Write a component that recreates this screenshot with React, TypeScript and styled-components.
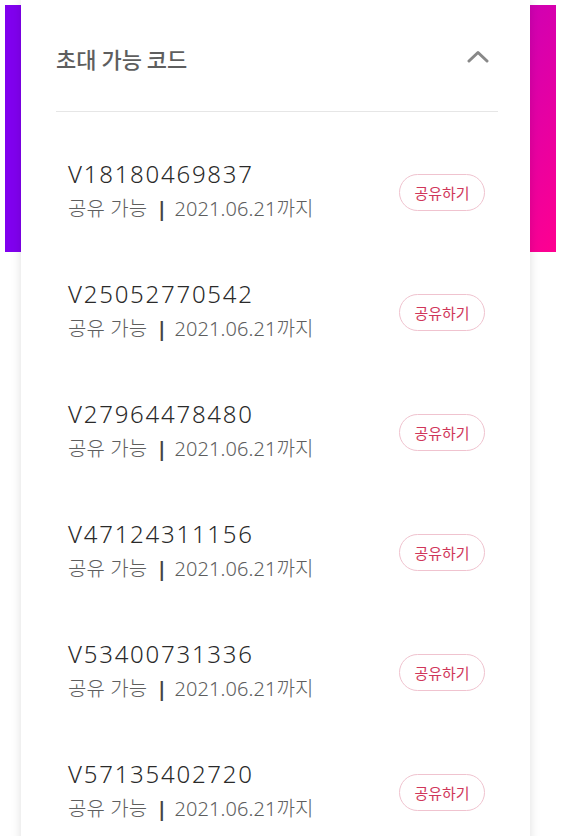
import React from "react";
import styled, { createGlobalStyle } from "styled-components";

const GlobalStyle = createGlobalStyle`
  html, body { margin: 0; padding: 0; background: #ffffff; }
  body { font-family: "Noto Sans", "Noto Sans CJK KR", sans-serif; }
  * { box-sizing: border-box; }
`;

const Page = styled.div`
  width: 563px;
  min-height: 836px;
  padding: 0 33px 0 21px;
  background-image: linear-gradient(120deg, #8000ee 35%, #ff0090 100%);
  background-repeat: no-repeat;
  background-position: 5px 5px;
  background-size: 551px 247px;
  overflow: hidden;
`;

const Card = styled.section`
  background: #ffffff;
  box-shadow: 0 0 10px rgba(0, 0, 0, 0.13);
  padding: 0 32px 0 35px;
  min-height: 836px;
`;

const Header = styled.div`
  height: 112px;
  padding-top: 4px;
  display: flex;
  align-items: center;
  justify-content: space-between;
  border-bottom: 1px solid #e6e6e6;
`;

const Title = styled.h2`
  margin: 0;
  font-family: "Noto Sans CJK KR", sans-serif;
  font-weight: 500;
  font-size: 22px;
  color: #5e5e5e;
`;

const Toggle = styled.button`
  border: none;
  background: none;
  padding: 0;
  margin-right: 9px;
  margin-top: -4px;
  width: 22px;
  height: 14px;
  display: flex;
  align-items: center;
  justify-content: center;
  cursor: pointer;
`;

const List = styled.ul`
  list-style: none;
  margin: 0;
  padding: 20px 0 0;
`;

const Row = styled.li`
  height: 120px;
  padding: 0 13px 0 12px;
  display: flex;
  align-items: center;
  justify-content: space-between;
`;

const Info = styled.div`
  display: flex;
  flex-direction: column;
  margin-top: -2px;
`;

const Code = styled.div`
  font-family: "Noto Sans", sans-serif;
  font-weight: 300;
  font-size: 24px;
  line-height: 30px;
  letter-spacing: 1.75px;
  color: #2a2a2a;
`;

const Meta = styled.div`
  margin-top: 6px;
  font-family: "Noto Sans", "Noto Sans CJK KR", sans-serif;
  font-weight: 300;
  font-size: 20px;
  line-height: 28px;
  letter-spacing: 0.1px;
  color: #5e5e5e;
  display: flex;
  align-items: center;
`;

const Sep = styled.span`
  font-weight: 700;
  color: #444444;
  margin: 0 7px 0 9px;
`;

const ShareButton = styled.button`
  width: 86px;
  height: 37px;
  border: 1px solid #f0c3cf;
  border-radius: 19px;
  background: #ffffff;
  color: #d0375a;
  font-family: "Noto Sans CJK KR", sans-serif;
  font-size: 15px;
  padding: 0;
  cursor: pointer;
`;

const codes = [
  "V18180469837",
  "V25052770542",
  "V27964478480",
  "V47124311156",
  "V53400731336",
  "V57135402720",
];

export default function App() {
  return (
    <>
      <GlobalStyle />
      <Page>
        <Card>
          <Header>
            <Title>초대 가능 코드</Title>
            <Toggle aria-label="접기">
              <svg width="22" height="14" viewBox="0 0 22 14">
                <polyline
                  points="2,12 11,3.5 20,12"
                  fill="none"
                  stroke="#888888"
                  strokeWidth="3"
                  strokeLinecap="round"
                  strokeLinejoin="round"
                />
              </svg>
            </Toggle>
          </Header>
          <List>
            {codes.map((c) => (
              <Row key={c}>
                <Info>
                  <Code>{c}</Code>
                  <Meta>
                    공유 가능<Sep>|</Sep>2021.06.21까지
                  </Meta>
                </Info>
                <ShareButton>공유하기</ShareButton>
              </Row>
            ))}
          </List>
        </Card>
      </Page>
    </>
  );
}
